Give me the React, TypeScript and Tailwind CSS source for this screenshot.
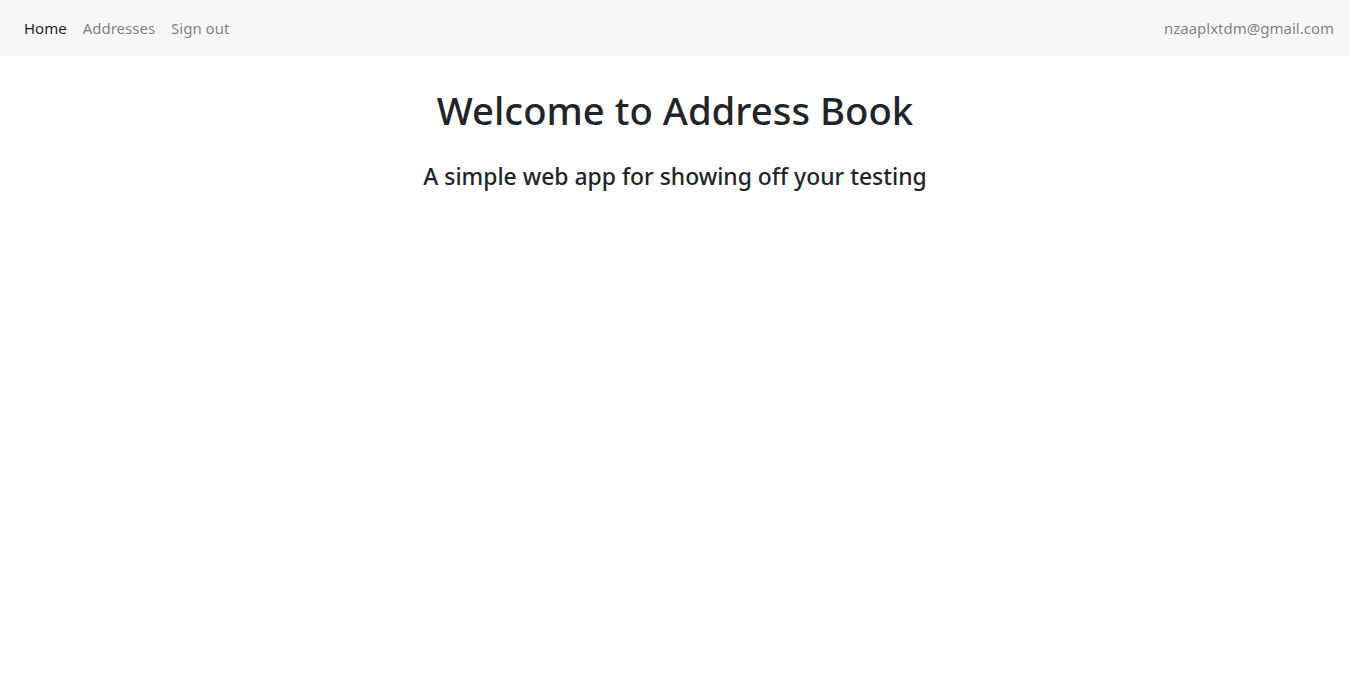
export default function App() {
  return (
    <div className="min-h-[680px] bg-white" style={{ fontFamily: '"Noto Sans", "Open Sans", sans-serif' }}>
      <nav className="flex h-[56px] items-center justify-between bg-[#f7f7f7] px-4">
        <ul className="flex items-center">
          <li><a className="block px-2 text-[15px] text-black/90">Home</a></li>
          <li><a className="block px-2 text-[15px] text-black/50">Addresses</a></li>
          <li><a className="block px-2 text-[15px] text-black/50">Sign out</a></li>
        </ul>
        <span className="text-[15px] text-black/50">nzaaplxtdm@gmail.com</span>
      </nav>
      <main className="text-center text-[#212529]">
        <h1 className="mt-[30px] text-[38.3px] font-medium leading-[48px]">Welcome to Address Book</h1>
        <h4 className="mt-[29px] text-[22.9px] font-medium leading-[28px]">A simple web app for showing off your testing</h4>
      </main>
    </div>
  );
}
